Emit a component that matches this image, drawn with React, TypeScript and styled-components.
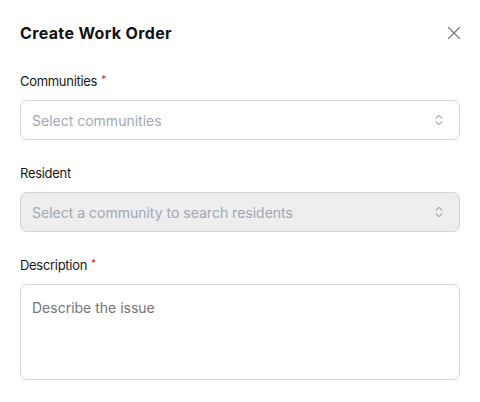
import styled, { createGlobalStyle } from 'styled-components';
import { ChevronsUpDown, X } from 'lucide-react';

const GlobalStyle = createGlobalStyle`
  * {
    box-sizing: border-box;
  }
  body {
    margin: 0;
    background: #ffffff;
    font-family: Inter, 'Liberation Sans', sans-serif;
    color: #111111;
  }
`;

const Dialog = styled.div`
  width: 480px;
  height: 402px;
  padding: 21px 20px 0 20px;
  background: #ffffff;
`;

const Header = styled.div`
  display: flex;
  align-items: center;
  justify-content: space-between;
  height: 24px;
  margin-bottom: 26px;
`;

const Title = styled.h2`
  margin: 0;
  font-size: 16px;
  font-weight: 700;
  letter-spacing: 0.35px;
  color: #111111;
`;

const CloseButton = styled.button`
  display: flex;
  align-items: center;
  justify-content: center;
  padding: 0;
  margin-right: -5px;
  border: none;
  background: none;
  color: #6b7280;
  cursor: pointer;
`;

const Form = styled.form`
  display: flex;
  flex-direction: column;
  gap: 23px;
`;

const Field = styled.div`
  display: flex;
  flex-direction: column;
  gap: 9px;
`;

const Label = styled.label`
  font-size: 13px;
  line-height: 20px;
  font-weight: 400;
  letter-spacing: -0.3px;
  color: #18181b;
`;

const Required = styled.span`
  display: inline-block;
  margin-left: 4px;
  font-size: 10px;
  line-height: 10px;
  vertical-align: 3px;
  color: #dc2626;
`;

const SelectBox = styled.div<{ disabled?: boolean }>`
  display: flex;
  align-items: center;
  justify-content: space-between;
  height: 40px;
  padding: 0 13px 0 11px;
  border: 1px solid #d4d4d8;
  border-radius: 7px;
  background: ${(props) => (props.disabled ? '#eeeeee' : '#ffffff')};
  color: #6b7280;
`;

const Placeholder = styled.span`
  font-size: 14px;
  color: #a1a7b3;
`;

const TextArea = styled.textarea`
  height: 96px;
  padding: 12px 11px;
  border: 1px solid #d4d4d8;
  border-radius: 7px;
  font-family: inherit;
  font-size: 14px;
  line-height: 22px;
  resize: none;
  outline: none;

  ::placeholder {
    color: #a1a7b3;
  }
`;

const App = () => {
  return (
    <Dialog>
      <GlobalStyle />
      <Header>
        <Title>Create Work Order</Title>
        <CloseButton type="button">
          <X size={22} strokeWidth={1.2} />
        </CloseButton>
      </Header>
      <Form>
        <Field>
          <Label>
            Communities<Required>*</Required>
          </Label>
          <SelectBox>
            <Placeholder>Select communities</Placeholder>
            <ChevronsUpDown size={14} strokeWidth={1.5} />
          </SelectBox>
        </Field>
        <Field>
          <Label>Resident</Label>
          <SelectBox disabled>
            <Placeholder>Select a community to search residents</Placeholder>
            <ChevronsUpDown size={14} strokeWidth={1.5} />
          </SelectBox>
        </Field>
        <Field>
          <Label>
            Description<Required>*</Required>
          </Label>
          <TextArea placeholder="Describe the issue" />
        </Field>
      </Form>
    </Dialog>
  );
};

export default App;
